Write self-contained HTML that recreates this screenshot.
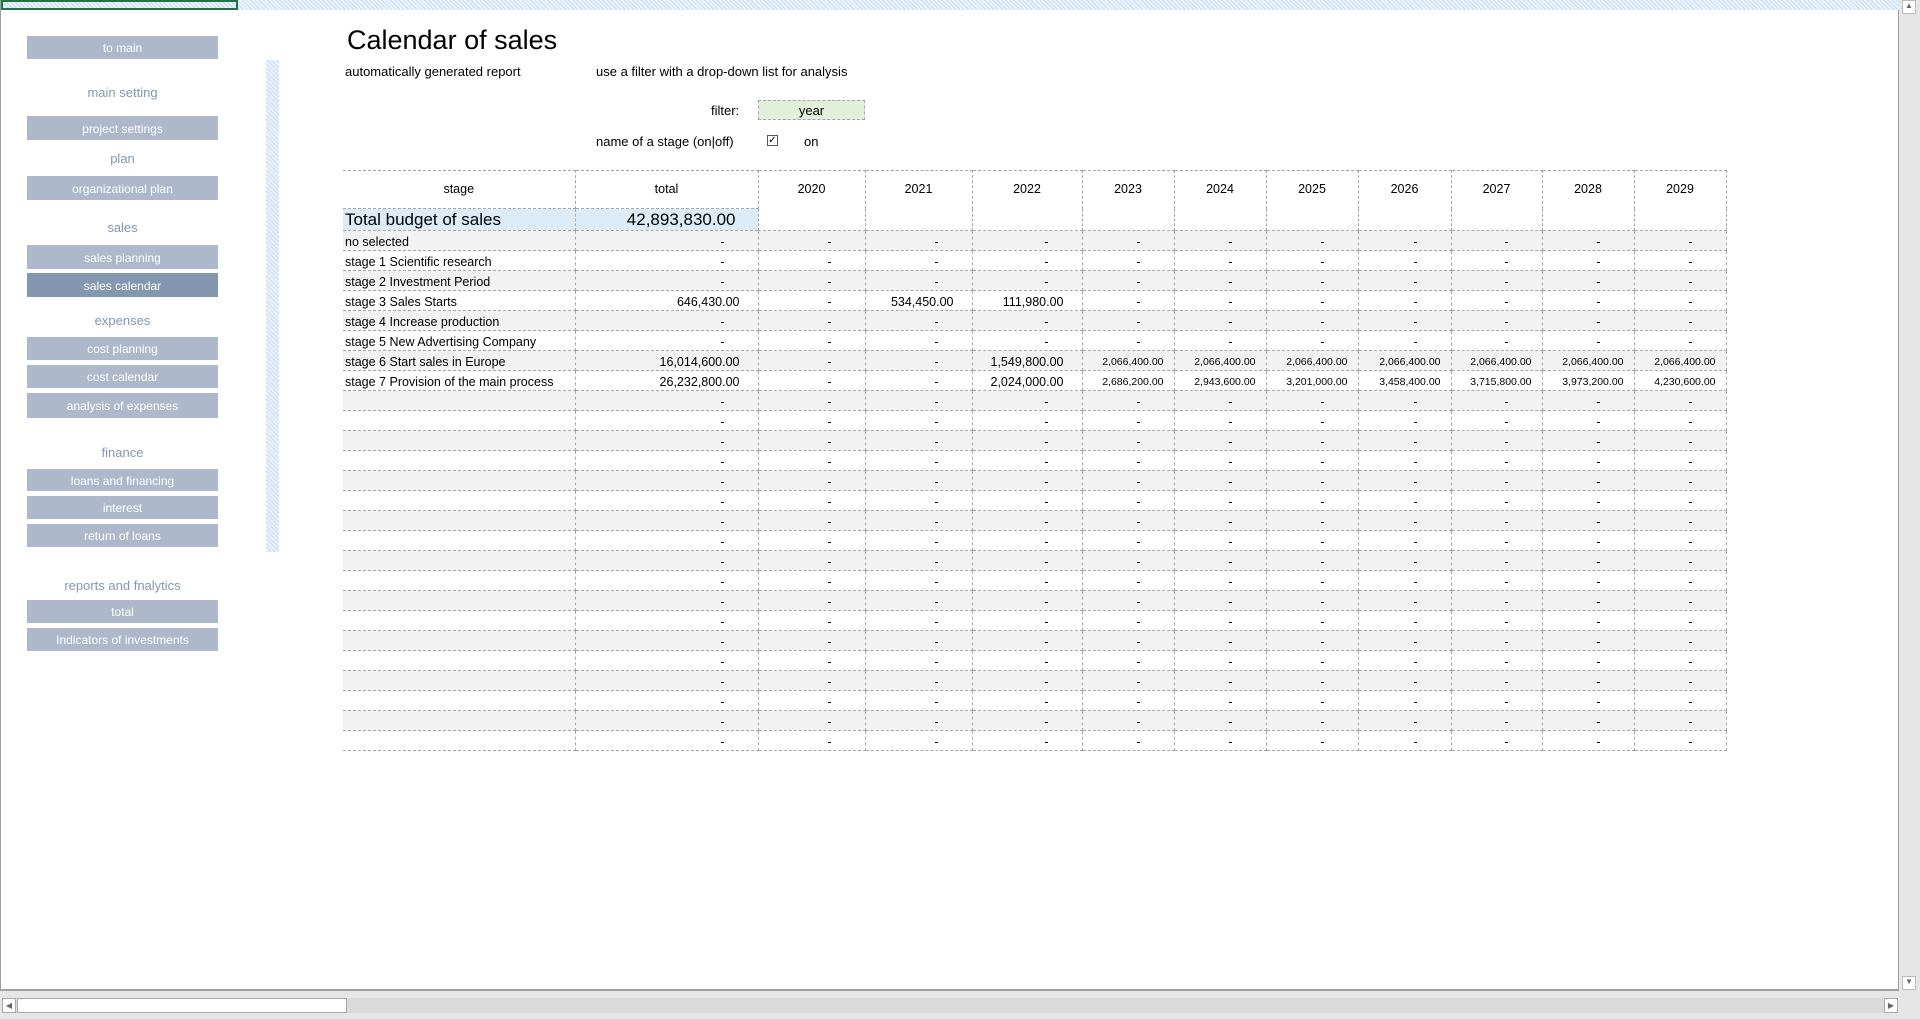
<!DOCTYPE html>
<html><head><meta charset="utf-8"><style>
*{margin:0;padding:0;box-sizing:border-box}
body{width:1920px;height:1019px;background:#e6e6e6;position:relative;overflow:hidden;font-family:"Liberation Sans",sans-serif;color:#000}
#sheet{position:absolute;left:0;top:0;width:1899px;height:991px;background:#fff;border-right:1px solid #a0a0a0;border-bottom:2px solid #a0a0a0;border-left:1px solid #a0a0a0}
.hatch{background:repeating-linear-gradient(45deg,#c9dcf0 0 1px,#eaf2fb 1px 3px)}
.btn{position:absolute;left:26px;width:191px;background:#adb9ca;color:#fff;font-size:12px;text-align:center;display:flex;align-items:center;justify-content:center;padding-top:1px}
.hd{position:absolute;left:26px;width:191px;color:#8497b0;font-size:13px;text-align:center}
.t{position:absolute;font-size:13px;white-space:nowrap}
table{position:absolute;left:342px;top:170px;border-collapse:collapse;table-layout:fixed;font-size:12.5px}
td{border-left:1px dashed #a6a6a6;border-right:1px dashed #a6a6a6;border-bottom:1px dashed #a6a6a6;height:20px;padding:2px 0 0 0;white-space:nowrap;overflow:hidden}
tr.h td{border-top:1px dashed #a6a6a6;text-align:center;vertical-align:top;padding-top:11px}
td.s{text-align:left;padding-left:2px;border-left:none}
td.n{text-align:right;padding-right:18px}
td.d{text-align:right;padding-right:33px}
td.sm{text-align:right;padding-right:10px;font-size:10.5px}
tr.g td{background:#f2f2f2}
</style></head><body>
<div id="sheet">
<div class="hatch" style="position:absolute;left:0;top:0;width:1898px;height:10px"></div>
<div style="position:absolute;left:0;top:0;width:237px;height:10px;border:2px solid #217346;background:transparent"></div>
<div class="hatch" style="position:absolute;left:265px;top:60px;width:13px;height:492px"></div>

<div class="btn" style="top:36px;height:23px">to main</div>
<div class="hd" style="top:85px">main setting</div>
<div class="btn" style="top:116px;height:24px">project settings</div>
<div class="hd" style="top:151px">plan</div>
<div class="btn" style="top:176px;height:24px">organizational plan</div>
<div class="hd" style="top:220px">sales</div>
<div class="btn" style="top:245px;height:24px">sales planning</div>
<div class="btn" style="top:273px;height:24px;background:#8497b0">sales calendar</div>
<div class="hd" style="top:313px">expenses</div>
<div class="btn" style="top:337px;height:23px">cost planning</div>
<div class="btn" style="top:365px;height:23px">cost calendar</div>
<div class="btn" style="top:393px;height:25px">analysis of expenses</div>
<div class="hd" style="top:445px">finance</div>
<div class="btn" style="top:469px;height:22px">loans and financing</div>
<div class="btn" style="top:496px;height:23px">interest</div>
<div class="btn" style="top:524px;height:23px">return of loans</div>
<div class="hd" style="top:578px">reports and fnalytics</div>
<div class="btn" style="top:600px;height:23px">total</div>
<div class="btn" style="top:628px;height:23px">Indicators of investments</div>

<div class="t" style="left:346px;top:25px;font-size:27px">Calendar of sales</div>
<div class="t" style="left:344px;top:64px">automatically generated report</div>
<div class="t" style="left:595px;top:64px">use a filter with a drop-down list for analysis</div>
<div class="t" style="left:710px;top:103px">filter:</div>
<div style="position:absolute;left:757px;top:100px;width:107px;height:20px;background:#e2efda;border:1px dashed #a6a6a6;font-size:13px;text-align:center;line-height:20px">year</div>
<div class="t" style="left:595px;top:134px">name of a stage (on|off)</div>
<div style="position:absolute;left:766px;top:135px;width:11px;height:11px;border:1px solid #555;font-size:10px;line-height:9px;text-align:center">✓</div>
<div class="t" style="left:803px;top:134px">on</div>

<table>
<colgroup><col style="width:232px"><col style="width:183px"><col style="width:107px"><col style="width:107px"><col style="width:110px"><col style="width:92px"><col style="width:92px"><col style="width:92px"><col style="width:93px"><col style="width:91px"><col style="width:92px"><col style="width:92px"></colgroup>
<tr class="h"><td style="height:38px;border-left:none">stage</td><td>total</td><td rowspan="2">2020</td><td rowspan="2">2021</td><td rowspan="2">2022</td><td rowspan="2">2023</td><td rowspan="2">2024</td><td rowspan="2">2025</td><td rowspan="2">2026</td><td rowspan="2">2027</td><td rowspan="2">2028</td><td rowspan="2">2029</td></tr>
<tr><td class="s" style="background:#ddebf7;font-size:17px;height:22px;padding-top:1px">Total budget of sales</td><td style="background:#ddebf7;font-size:17px;text-align:right;padding-right:22px;padding-top:1px">42,893,830.00</td></tr>
<tr class="g"><td class="s">no selected</td><td class="d">-</td><td class="d">-</td><td class="d">-</td><td class="d">-</td><td class="d">-</td><td class="d">-</td><td class="d">-</td><td class="d">-</td><td class="d">-</td><td class="d">-</td><td class="d">-</td></tr>
<tr><td class="s">stage 1 Scientific research</td><td class="d">-</td><td class="d">-</td><td class="d">-</td><td class="d">-</td><td class="d">-</td><td class="d">-</td><td class="d">-</td><td class="d">-</td><td class="d">-</td><td class="d">-</td><td class="d">-</td></tr>
<tr class="g"><td class="s">stage 2 Investment Period</td><td class="d">-</td><td class="d">-</td><td class="d">-</td><td class="d">-</td><td class="d">-</td><td class="d">-</td><td class="d">-</td><td class="d">-</td><td class="d">-</td><td class="d">-</td><td class="d">-</td></tr>
<tr><td class="s">stage 3 Sales Starts</td><td class="n">646,430.00</td><td class="d">-</td><td class="n">534,450.00</td><td class="n">111,980.00</td><td class="d">-</td><td class="d">-</td><td class="d">-</td><td class="d">-</td><td class="d">-</td><td class="d">-</td><td class="d">-</td></tr>
<tr class="g"><td class="s">stage 4 Increase production</td><td class="d">-</td><td class="d">-</td><td class="d">-</td><td class="d">-</td><td class="d">-</td><td class="d">-</td><td class="d">-</td><td class="d">-</td><td class="d">-</td><td class="d">-</td><td class="d">-</td></tr>
<tr><td class="s">stage 5 New Advertising Company</td><td class="d">-</td><td class="d">-</td><td class="d">-</td><td class="d">-</td><td class="d">-</td><td class="d">-</td><td class="d">-</td><td class="d">-</td><td class="d">-</td><td class="d">-</td><td class="d">-</td></tr>
<tr class="g"><td class="s">stage 6 Start sales in Europe</td><td class="n">16,014,600.00</td><td class="d">-</td><td class="d">-</td><td class="n">1,549,800.00</td><td class="sm">2,066,400.00</td><td class="sm">2,066,400.00</td><td class="sm">2,066,400.00</td><td class="sm">2,066,400.00</td><td class="sm">2,066,400.00</td><td class="sm">2,066,400.00</td><td class="sm">2,066,400.00</td></tr>
<tr><td class="s" style="font-size:12.5px">stage 7 Provision of the main process</td><td class="n">26,232,800.00</td><td class="d">-</td><td class="d">-</td><td class="n">2,024,000.00</td><td class="sm">2,686,200.00</td><td class="sm">2,943,600.00</td><td class="sm">3,201,000.00</td><td class="sm">3,458,400.00</td><td class="sm">3,715,800.00</td><td class="sm">3,973,200.00</td><td class="sm">4,230,600.00</td></tr>
<tr class="g"><td class="s"></td><td class="d">-</td><td class="d">-</td><td class="d">-</td><td class="d">-</td><td class="d">-</td><td class="d">-</td><td class="d">-</td><td class="d">-</td><td class="d">-</td><td class="d">-</td><td class="d">-</td></tr>
<tr><td class="s"></td><td class="d">-</td><td class="d">-</td><td class="d">-</td><td class="d">-</td><td class="d">-</td><td class="d">-</td><td class="d">-</td><td class="d">-</td><td class="d">-</td><td class="d">-</td><td class="d">-</td></tr>
<tr class="g"><td class="s"></td><td class="d">-</td><td class="d">-</td><td class="d">-</td><td class="d">-</td><td class="d">-</td><td class="d">-</td><td class="d">-</td><td class="d">-</td><td class="d">-</td><td class="d">-</td><td class="d">-</td></tr>
<tr><td class="s"></td><td class="d">-</td><td class="d">-</td><td class="d">-</td><td class="d">-</td><td class="d">-</td><td class="d">-</td><td class="d">-</td><td class="d">-</td><td class="d">-</td><td class="d">-</td><td class="d">-</td></tr>
<tr class="g"><td class="s"></td><td class="d">-</td><td class="d">-</td><td class="d">-</td><td class="d">-</td><td class="d">-</td><td class="d">-</td><td class="d">-</td><td class="d">-</td><td class="d">-</td><td class="d">-</td><td class="d">-</td></tr>
<tr><td class="s"></td><td class="d">-</td><td class="d">-</td><td class="d">-</td><td class="d">-</td><td class="d">-</td><td class="d">-</td><td class="d">-</td><td class="d">-</td><td class="d">-</td><td class="d">-</td><td class="d">-</td></tr>
<tr class="g"><td class="s"></td><td class="d">-</td><td class="d">-</td><td class="d">-</td><td class="d">-</td><td class="d">-</td><td class="d">-</td><td class="d">-</td><td class="d">-</td><td class="d">-</td><td class="d">-</td><td class="d">-</td></tr>
<tr><td class="s"></td><td class="d">-</td><td class="d">-</td><td class="d">-</td><td class="d">-</td><td class="d">-</td><td class="d">-</td><td class="d">-</td><td class="d">-</td><td class="d">-</td><td class="d">-</td><td class="d">-</td></tr>
<tr class="g"><td class="s"></td><td class="d">-</td><td class="d">-</td><td class="d">-</td><td class="d">-</td><td class="d">-</td><td class="d">-</td><td class="d">-</td><td class="d">-</td><td class="d">-</td><td class="d">-</td><td class="d">-</td></tr>
<tr><td class="s"></td><td class="d">-</td><td class="d">-</td><td class="d">-</td><td class="d">-</td><td class="d">-</td><td class="d">-</td><td class="d">-</td><td class="d">-</td><td class="d">-</td><td class="d">-</td><td class="d">-</td></tr>
<tr class="g"><td class="s"></td><td class="d">-</td><td class="d">-</td><td class="d">-</td><td class="d">-</td><td class="d">-</td><td class="d">-</td><td class="d">-</td><td class="d">-</td><td class="d">-</td><td class="d">-</td><td class="d">-</td></tr>
<tr><td class="s"></td><td class="d">-</td><td class="d">-</td><td class="d">-</td><td class="d">-</td><td class="d">-</td><td class="d">-</td><td class="d">-</td><td class="d">-</td><td class="d">-</td><td class="d">-</td><td class="d">-</td></tr>
<tr class="g"><td class="s"></td><td class="d">-</td><td class="d">-</td><td class="d">-</td><td class="d">-</td><td class="d">-</td><td class="d">-</td><td class="d">-</td><td class="d">-</td><td class="d">-</td><td class="d">-</td><td class="d">-</td></tr>
<tr><td class="s"></td><td class="d">-</td><td class="d">-</td><td class="d">-</td><td class="d">-</td><td class="d">-</td><td class="d">-</td><td class="d">-</td><td class="d">-</td><td class="d">-</td><td class="d">-</td><td class="d">-</td></tr>
<tr class="g"><td class="s"></td><td class="d">-</td><td class="d">-</td><td class="d">-</td><td class="d">-</td><td class="d">-</td><td class="d">-</td><td class="d">-</td><td class="d">-</td><td class="d">-</td><td class="d">-</td><td class="d">-</td></tr>
<tr><td class="s"></td><td class="d">-</td><td class="d">-</td><td class="d">-</td><td class="d">-</td><td class="d">-</td><td class="d">-</td><td class="d">-</td><td class="d">-</td><td class="d">-</td><td class="d">-</td><td class="d">-</td></tr>
<tr class="g"><td class="s"></td><td class="d">-</td><td class="d">-</td><td class="d">-</td><td class="d">-</td><td class="d">-</td><td class="d">-</td><td class="d">-</td><td class="d">-</td><td class="d">-</td><td class="d">-</td><td class="d">-</td></tr>
<tr><td class="s"></td><td class="d">-</td><td class="d">-</td><td class="d">-</td><td class="d">-</td><td class="d">-</td><td class="d">-</td><td class="d">-</td><td class="d">-</td><td class="d">-</td><td class="d">-</td><td class="d">-</td></tr>
</table>
</div>
<div style="position:absolute;left:1900px;top:0;width:20px;height:991px;background:#e6e6e6"></div>
<div style="position:absolute;left:1902px;top:0;width:14px;height:14px;background:#fff;border:1px solid #bbb;font-size:8px;text-align:center;color:#666">▲</div>
<div style="position:absolute;left:1902px;top:976px;width:14px;height:14px;background:#fff;border:1px solid #bbb;font-size:8px;text-align:center;color:#666">▼</div>
<div style="position:absolute;left:2px;top:998px;width:1896px;height:15px;background:#dadada"></div>
<div style="position:absolute;left:2px;top:998px;width:14px;height:15px;background:#fff;border:1px solid #aaa;font-size:8px;line-height:13px;text-align:center;color:#666">◀</div>
<div style="position:absolute;left:17px;top:998px;width:330px;height:15px;background:#fff;border:1px solid #aaa"></div>
<div style="position:absolute;left:1884px;top:998px;width:14px;height:15px;background:#fff;border:1px solid #aaa;font-size:8px;line-height:13px;text-align:center;color:#666">▶</div>
</body></html>
